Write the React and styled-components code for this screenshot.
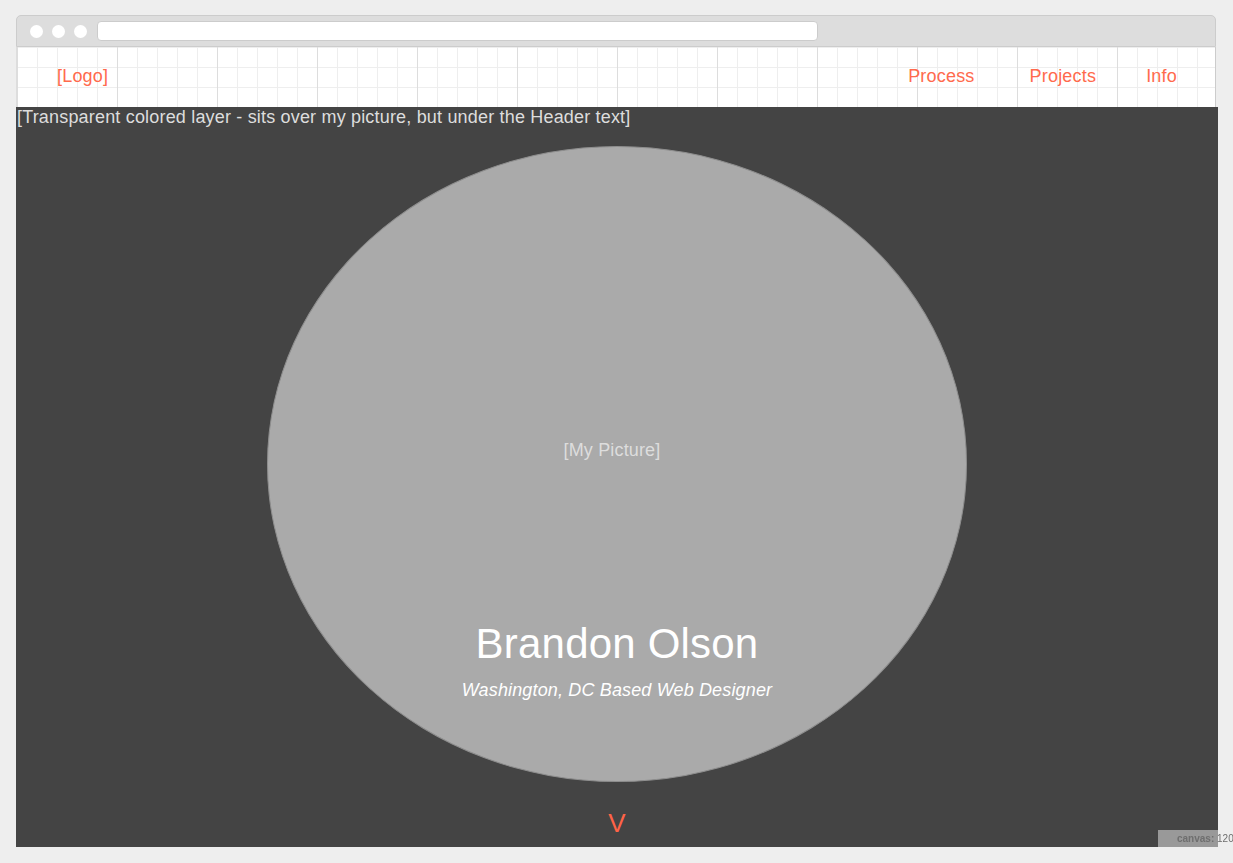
import React from "react";
import styled, { createGlobalStyle } from "styled-components";

const Global = createGlobalStyle`
  html, body { margin: 0; padding: 0; background: #eeeeee; }
  body { font-family: "Liberation Sans", Arial, sans-serif; overflow: hidden; }
  * { box-sizing: border-box; }
`;

const Page = styled.div`
  padding: 15px 0 0 16px;
  width: 1233px;
  height: 863px;
`;

const Chrome = styled.div`
  width: 1200px;
`;

const TopBar = styled.div`
  height: 32px;
  background: #dddddd;
  border: 1px solid #cccccc;
  border-radius: 5px 5px 0 0;
  display: flex;
  align-items: center;
  padding-left: 13px;
  gap: 9px;
`;

const Dot = styled.span`
  width: 13px;
  height: 13px;
  border-radius: 50%;
  background: #ffffff;
  flex: none;
`;

const UrlBar = styled.div`
  width: 721px;
  height: 20px;
  margin-left: 1px;
  background: #ffffff;
  border: 1px solid #cccccc;
  border-radius: 4px;
`;

const Header = styled.header`
  height: 60px;
  background-color: #ffffff;
  background-image:
    linear-gradient(to right, #dddddd 1px, transparent 1px),
    linear-gradient(to right, #eeeeee 1px, transparent 1px),
    linear-gradient(to bottom, #eeeeee 1px, transparent 1px);
  background-size: 100px 100%, 20px 100%, 100% 20px;
  border-left: 1px solid #dddddd;
  border-right: 1px solid #cccccc;
  display: flex;
  align-items: center;
  justify-content: space-between;
  padding: 0 38px 2px 40px;
  font-size: 18px;
  letter-spacing: 0.2px;
  color: #ff6a4d;
`;

const NavItem = styled.span`
  margin-left: ${(p) => p.$gap || 0}px;
  line-height: 20px;
`;

const Nav = styled.nav`
  display: flex;
`;

const Hero = styled.section`
  width: 1202px;
  height: 740px;
  background: #444444;
  display: flex;
  flex-direction: column;
  align-items: center;
`;

const LayerNote = styled.div`
  align-self: flex-start;
  padding-left: 1px;
  font-size: 18px;
  line-height: 20px;
  letter-spacing: 0.18px;
  color: #dddddd;
`;

const Circle = styled.div`
  margin-top: 19px;
  width: 700px;
  height: 636px;
  border-radius: 50%;
  background: #aaaaaa;
  border: 1px solid #8e8e8e;
  display: flex;
  flex-direction: column;
  align-items: center;
  flex: none;
`;

const PictureLabel = styled.div`
  margin-top: 292px;
  margin-left: -10px;
  font-size: 18px;
  line-height: 22px;
  letter-spacing: 0.15px;
  color: #dddddd;
`;

const Name = styled.h1`
  margin: 158px 0 0;
  font-size: 42px;
  line-height: 50px;
  font-weight: normal;
  letter-spacing: 0.2px;
  color: #ffffff;
`;

const Subtitle = styled.p`
  margin: 10px 0 0;
  font-size: 18px;
  line-height: 22px;
  font-style: italic;
  letter-spacing: 0.15px;
  color: #ffffff;
`;

const Arrow = styled.div`
  margin-top: 25px;
  font-size: 26px;
  line-height: 32px;
  color: #ff6347;
`;

const Badge = styled.div`
  position: fixed;
  left: 1158px;
  top: 830px;
  height: 17px;
  width: 120px;
  padding-left: 19px;
  background: rgba(238, 238, 238, 0.5);
  font-size: 10px;
  line-height: 18px;
  color: #6f6f6f;
  white-space: nowrap;
  & b { font-weight: bold; }
`;

export default function App() {
  return (
    <>
      <Global />
      <Page>
        <Chrome>
          <TopBar>
            <Dot />
            <Dot />
            <Dot />
            <UrlBar />
          </TopBar>
          <Header>
            <NavItem>[Logo]</NavItem>
            <Nav>
              <NavItem>Process</NavItem>
              <NavItem $gap={55}>Projects</NavItem>
              <NavItem $gap={50}>Info</NavItem>
            </Nav>
          </Header>
        </Chrome>
        <Hero>
          <LayerNote>
            [Transparent colored layer - sits over my picture, but under the Header text]
          </LayerNote>
          <Circle>
            <PictureLabel>[My Picture]</PictureLabel>
            <Name>Brandon Olson</Name>
            <Subtitle>Washington, DC Based Web Designer</Subtitle>
          </Circle>
          <Arrow>V</Arrow>
        </Hero>
      </Page>
      <Badge>
        <b>canvas:</b> 1200
      </Badge>
    </>
  );
}
